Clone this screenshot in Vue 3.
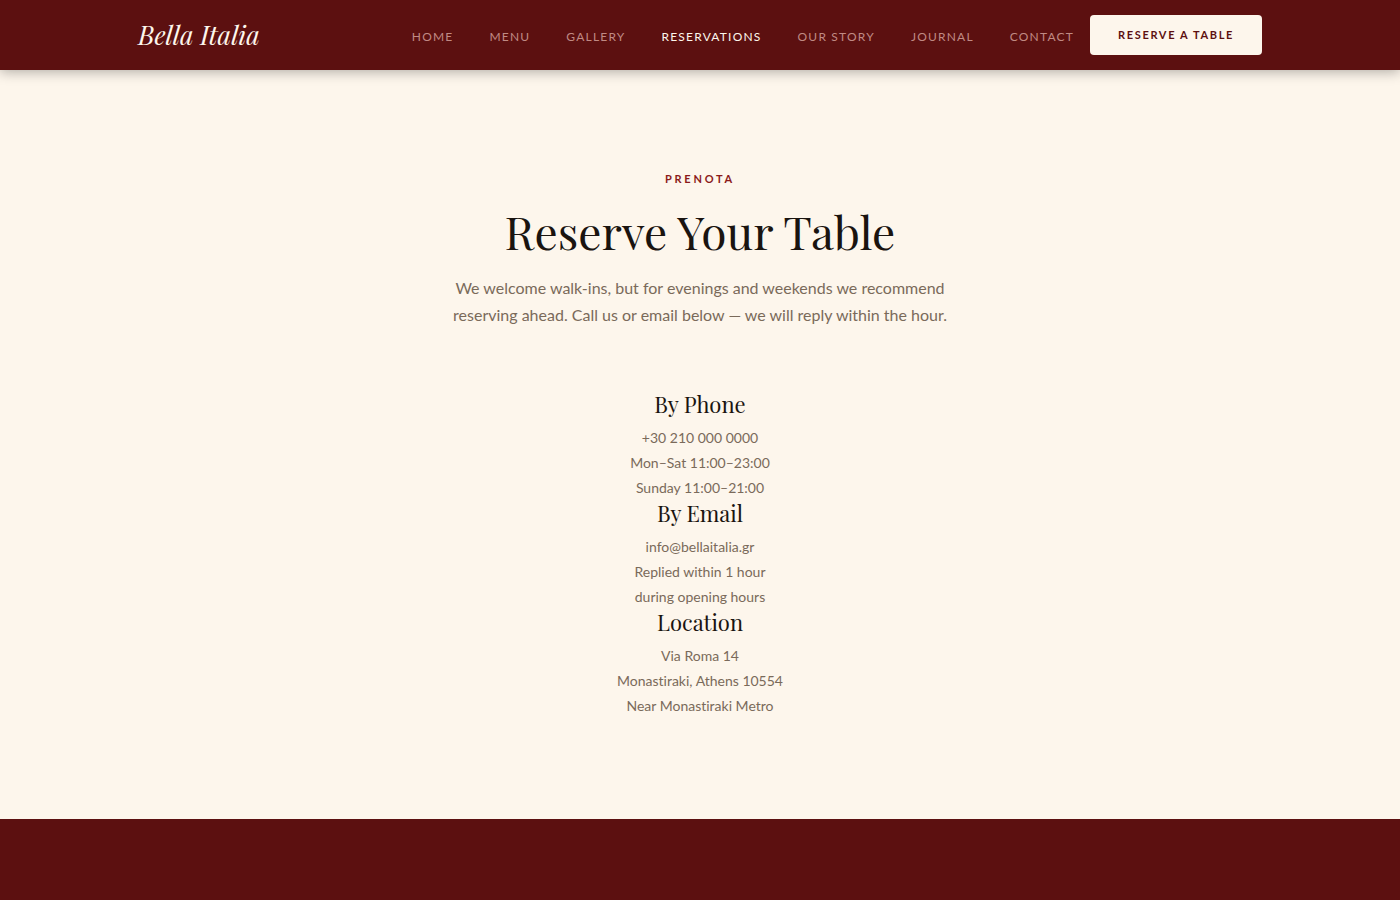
<script setup>
const links = ['Home', 'Menu', 'Gallery', 'Reservations', 'Our Story', 'Journal', 'Contact']
const current = 'Reservations'
const details = [
  { title: 'By Phone', lines: ['+30 210 000 0000', 'Mon–Sat 11:00–23:00', 'Sunday 11:00–21:00'] },
  { title: 'By Email', lines: ['info@bellaitalia.gr', 'Replied within 1 hour', 'during opening hours'] },
  { title: 'Location', lines: ['Via Roma 14', 'Monastiraki, Athens 10554', 'Near Monastiraki Metro'] },
]
</script>

<template>
  <div class="page">
    <header class="header">
      <div class="bar">
        <a class="logo" href="#">Bella Italia</a>
        <nav class="nav" aria-label="Main">
          <a
            v-for="link in links"
            :key="link"
            class="link"
            :class="{ active: link === current }"
            :aria-current="link === current ? 'page' : undefined"
            href="#"
          >{{ link }}</a>
        </nav>
        <a class="reserve" href="#">Reserve a Table</a>
      </div>
    </header>

    <main class="main">
      <p class="eyebrow">Prenota</p>
      <h1 class="title">Reserve Your Table</h1>
      <p class="intro">
        We welcome walk-ins, but for evenings and weekends we recommend
        reserving ahead. Call us or email below — we will reply within the hour.
      </p>
      <section v-for="item in details" :key="item.title" class="detail">
        <h2 class="subtitle">{{ item.title }}</h2>
        <p v-for="line in item.lines" :key="line" class="line">{{ line }}</p>
      </section>
    </main>

    <footer class="footer"></footer>
  </div>
</template>

<style>
body {
  margin: 0;
  background: #5c1010;
}
</style>

<style scoped>
.page {
  display: flex;
  flex-direction: column;
  min-height: 100vh;
  background: #fdf6ec;
  font-family: Lato, "Liberation Sans", sans-serif;
  font-variant-ligatures: none;
  color: #7a6a5a;
}
.header {
  position: sticky;
  top: 0;
  background: #5c1010;
  box-shadow: 0 2px 12px rgba(0, 0, 0, 0.3);
}
.bar {
  display: flex;
  align-items: center;
  box-sizing: border-box;
  max-width: 1180px;
  height: 70px;
  margin: 0 auto;
  padding: 0 28px;
}
a {
  text-decoration: none;
}
.logo {
  margin-right: auto;
  font: italic 400 26px/36px "Playfair Display", "Liberation Serif", serif;
  color: #fdf6ec;
}
.nav {
  display: flex;
  gap: 36px;
  margin-right: 16px;
  padding-top: 4px;
}
.link {
  font-size: 12px;
  line-height: 20px;
  letter-spacing: 0.1em;
  text-transform: uppercase;
  color: #c08a84;
}
.link.active {
  color: #fdf6ec;
}
.reserve {
  padding: 10px 28px;
  border-radius: 4px;
  background: #fdf6ec;
  font-size: 11px;
  font-weight: 700;
  line-height: 20px;
  letter-spacing: 0.15em;
  text-transform: uppercase;
  color: #5c1010;
}
.main {
  padding: 100px 28px 101px;
  text-align: center;
}
.eyebrow {
  margin: 0 0 16px;
  font-size: 11px;
  font-weight: 700;
  line-height: 18px;
  letter-spacing: 0.25em;
  text-transform: uppercase;
  color: #8b1a1a;
}
.title {
  margin: 0 0 16px;
  font: 400 46px/54px "Playfair Display", "Liberation Serif", serif;
  color: #1a1410;
}
.intro {
  max-width: 520px;
  margin: 0 auto 63px;
  font-size: 16px;
  line-height: 27px;
}
.subtitle {
  margin: 0 0 8px;
  font: 400 22px/26px "Playfair Display", "Liberation Serif", serif;
  color: #1a1410;
}
.line {
  margin: 0;
  font-size: 14px;
  line-height: 25px;
}
.footer {
  flex: 1;
  min-height: 80px;
  background: #5c1010;
}
</style>
